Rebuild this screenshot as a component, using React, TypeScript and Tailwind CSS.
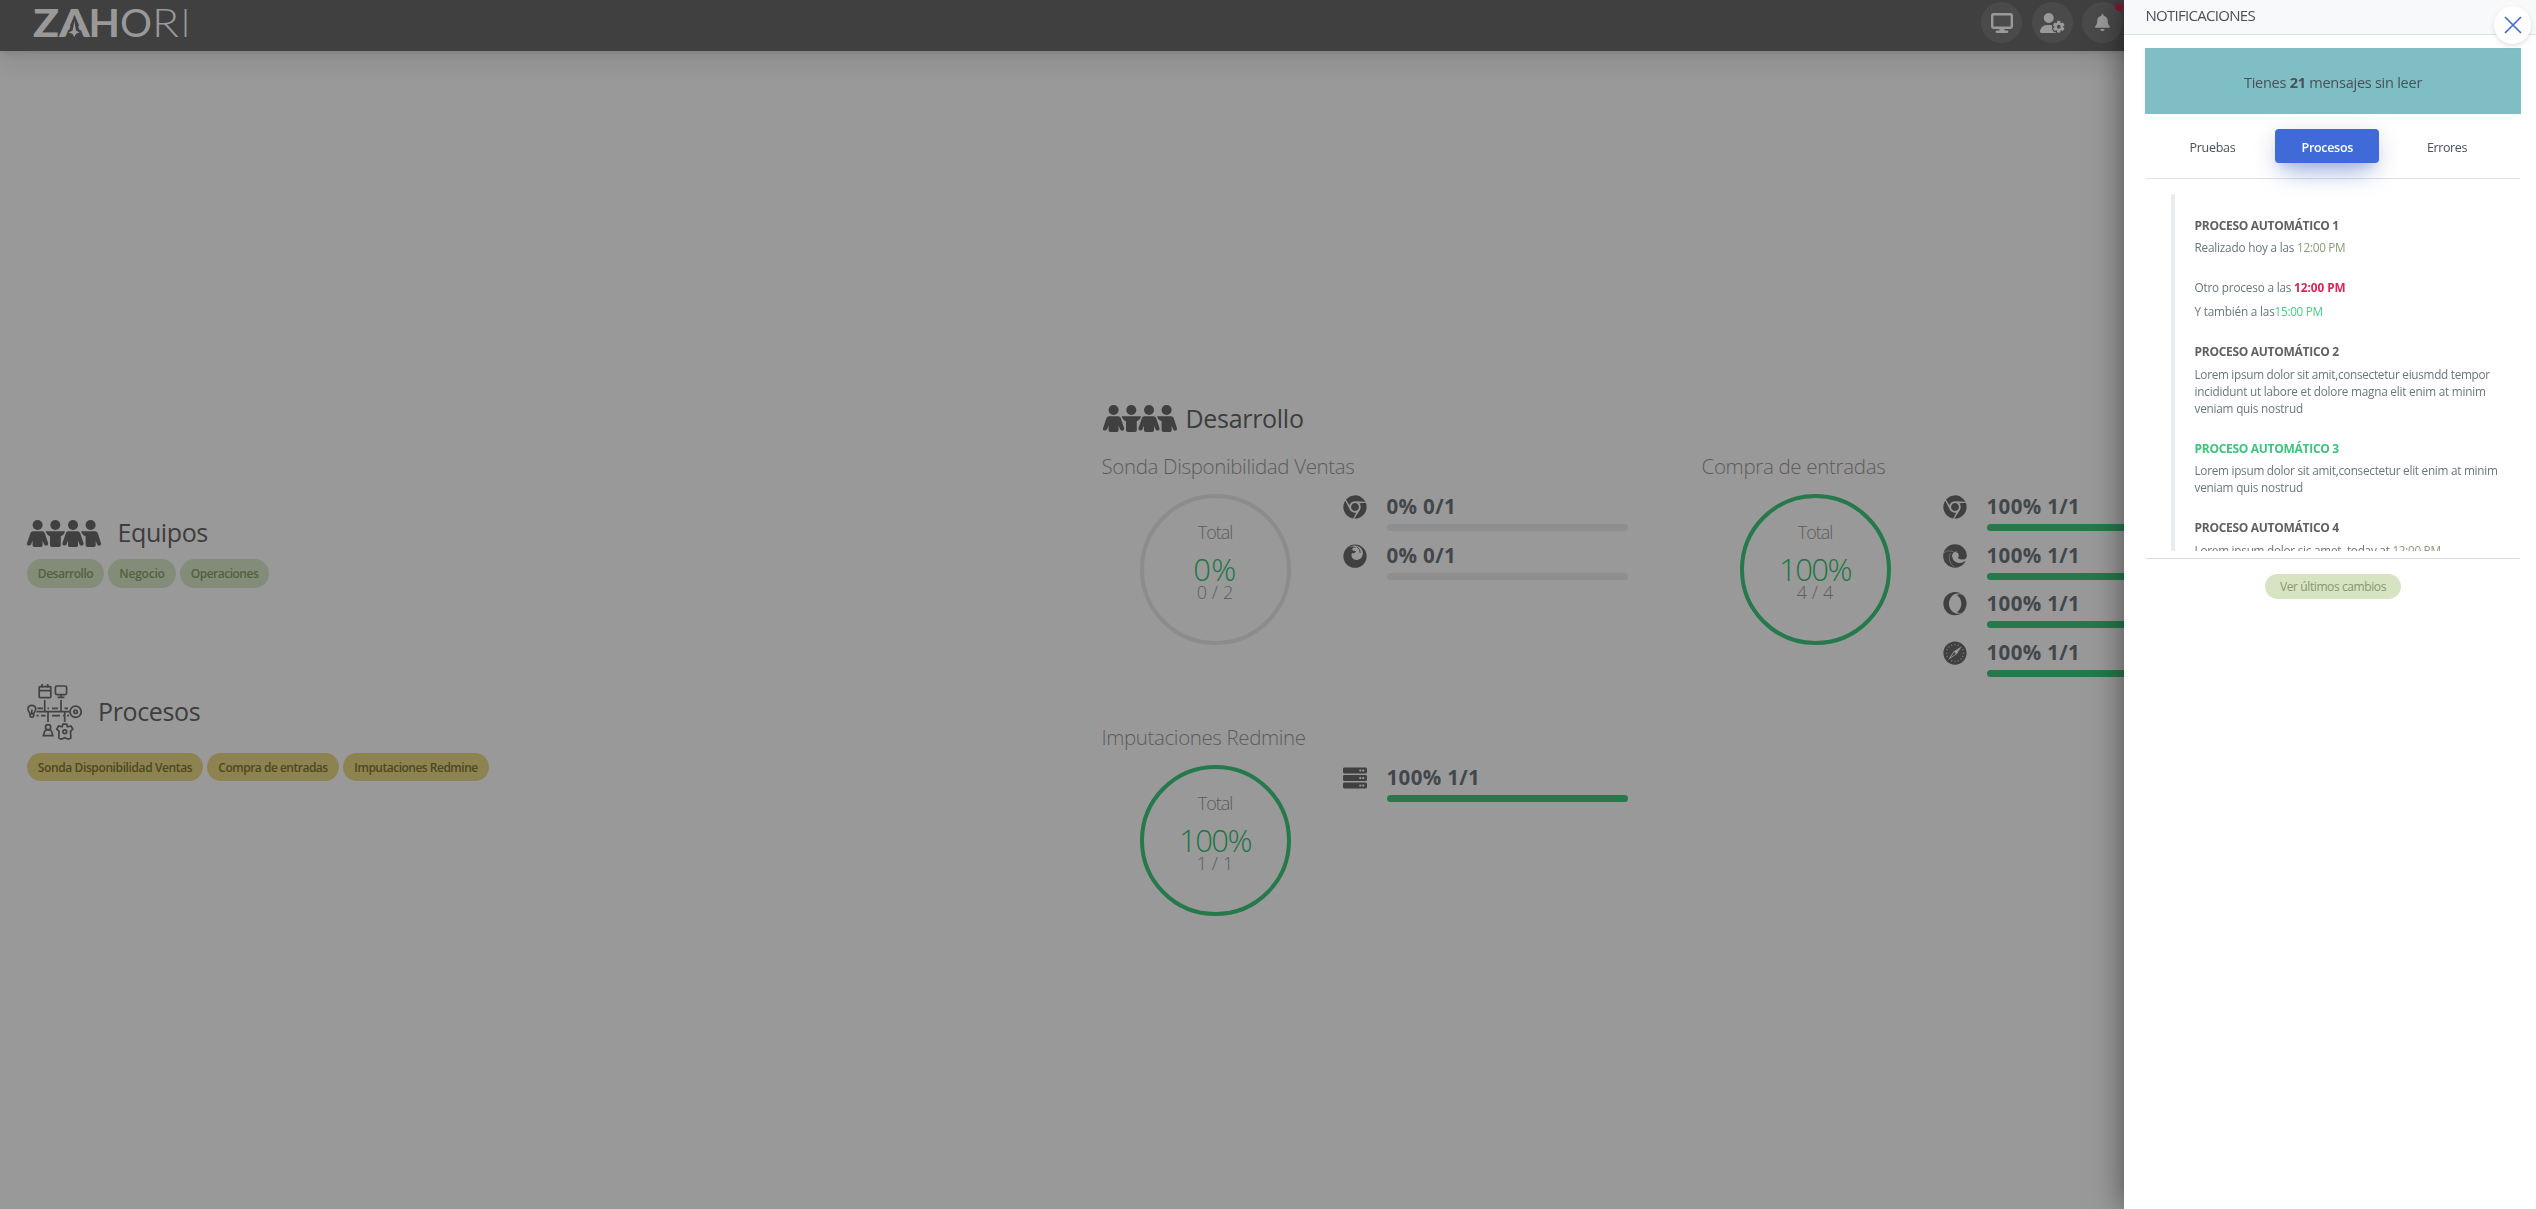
import type { ReactNode } from "react";
import { FaChrome, FaServer, FaBell, FaOpera, FaSafari } from "react-icons/fa";
import { FaUserGear } from "react-icons/fa6";

function Logo() {
  return (
    <svg
      className="h-[51px] w-[200px] shrink-0 fill-[#999999] font-['Lato']"
      viewBox="0 0 200 51"
    >
      <g fontSize="38.5">
        <text x="33" y="37" fontWeight="900" textLength="26" lengthAdjust="spacingAndGlyphs">Z</text>
        <text x="59" y="37" fontWeight="900" textLength="31" lengthAdjust="spacingAndGlyphs">A</text>
        <text x="88.5" y="37" fontWeight="700" textLength="31.5" lengthAdjust="spacingAndGlyphs">H</text>
        <text x="120" y="37" fontWeight="400" textLength="32" lengthAdjust="spacingAndGlyphs">O</text>
        <text x="152" y="37" fontWeight="300" textLength="27" lengthAdjust="spacingAndGlyphs">R</text>
        <text x="181" y="37" fontWeight="300" textLength="9" lengthAdjust="spacingAndGlyphs">I</text>
      </g>
      <polygon points="74.3,17 66,37.6 82.6,37.6" fill="#404040" />
      <path d="M74.3 21 76 30.4 79.5 32.6 76 33.8 74.3 37 72.4 33.8 68.5 32.6 72.6 30.4Z" />
    </svg>
  );
}

function PeopleIcon() {
  return (
    <svg className="h-[27px] w-[74px] fill-[#404040]" viewBox="0 0 74 27">
      <circle cx="10.6" cy="5" r="5" />
      <circle cx="28.3" cy="5" r="5" />
      <circle cx="46" cy="5" r="5" />
      <circle cx="63.6" cy="5" r="5" />
      <path d="M6 11.3H15.2Q17 11.3 17.7 13L21.2 23.2Q21.4 25.4 19.5 25.7 17.6 25.8 17 24.3L15.6 20.5V25.6Q15.4 27 14 27H7.2Q5.6 27 5.6 25.6V20.5L4.2 24.3Q3.5 25.8 1.5 25.6-.4 25.2 0 23.2L3.5 13Q4.2 11.3 6 11.3Z" />
      <path d="M41.4 11.3H50.6Q52.4 11.3 53.1 13L56.6 23.2Q56.8 25.4 54.9 25.7 53 25.8 52.4 24.3L51 20.5V25.6Q50.8 27 49.4 27H42.6Q41 27 41 25.6V20.5L39.6 24.3Q38.9 25.8 36.9 25.6 35 25.2 35.4 23.2L38.9 13Q39.6 11.3 41.4 11.3Z" />
      <path d="M18.6 11.3H38L37.2 13.6Q36.6 14.9 35.2 15.4L33.8 16.2V25.6Q33.6 27 32 27H25Q23.2 27 23 25.6V16.2L21.5 15.4Q20.2 14.8 19.6 13.6Z" />
      <path d="M54 11.3H68.2Q70 11.3 70.7 13L74 23.2Q74.2 25.4 72.3 25.7 70.6 25.8 70 24.3L68.7 20.5V25.6Q68.5 27 67 27H60.4Q58.8 27 58.6 25.6V16.2L57 15.4Q55.6 14.8 55 13.6Z" />
    </svg>
  );
}

function ProcessIcon() {
  return (
    <svg
      className="h-[56px] w-[55px] fill-none stroke-[#434343] stroke-[1.7]"
      viewBox="0 0 55 56"
    >
      <rect x="12.2" y="2.6" width="11.6" height="11" rx="0.8" />
      <path d="M12.2 6.6H23.8M15.2 0V3.4M20.7 0V3.4" />
      <rect x="28.4" y="2" width="11.2" height="8.6" rx="1.6" />
      <path d="M34 10.6V13.4M30.6 13.4H37.4" />
      <path d="M17.7 16V27.7M34 16V27.7M21 27.7V38M37.7 27.7V38M9.5 27.7H43" />
      <path d="M10.5 24.3H16M20.5 24.3H22M25 24.3H31M37.5 24.3H41" />
      <path d="M9.5 31.6H11.5M14 31.6H18.5M25 31.6H33M36 31.6H37M40 31.6H42" />
      <circle cx="48.6" cy="27.8" r="5.6" />
      <circle cx="48.6" cy="27.8" r="1.7" />
      <path d="M3 29.4Q.9 27 .9 24.4A4 4 0 0 1 8.7 24.4Q8.7 27 6.7 29.4V31.6Q6.7 33.2 4.8 33.2 3 33.2 3 31.6ZM3 29.8H6.7M4.8 25.5V29" />
      <circle cx="21.1" cy="43.3" r="2.6" />
      <path d="M16.4 51.6 17.6 47.4Q18 46 19.6 46H22.6Q24.2 46 24.6 47.4L25.8 51.6Z" />
      <path d="M36 40.2H39.6L40.5 42.8 44 42 45.8 45.2 43.5 47.4 43.8 54 41.4 55.2 37.8 53.6 34.2 55.2 31.8 54 32.1 47.4 29.8 45.2 31.6 42 35.1 42.8Z" />
      <circle cx="37.8" cy="47.8" r="1.9" />
    </svg>
  );
}

function FirefoxIcon() {
  return (
    <svg className="size-[24px]" viewBox="0 0 24 24">
      <circle cx="12" cy="12.2" r="11.6" fill="#404040" />
      <path
        d="M5.2 3.6Q10 .4 14.8 2 20.6 4.6 19.8 10.4 18.6 15.8 13.6 15.9 8.6 15.4 8.4 11 8.6 8.6 11 7.4 8.6 6.4 9.4 4.6 10.8 2.8 13.4 3.2 8.6 1.8 5.2 3.6Z"
        fill="#999999"
      />
      <path d="M8.2 7.8Q10.4 6.2 13.2 7.2 12 9.2 10 9.4Z" fill="#404040" />
      <path d="M13.6 2.6Q17.6 5 17.2 9" fill="none" stroke="#404040" strokeWidth="0.9" />
    </svg>
  );
}

function EdgeIcon() {
  return (
    <svg className="size-[24px]" viewBox="0 0 24 24">
      <circle cx="12" cy="12" r="11.8" fill="#404040" />
      <path
        d="M14.2 7.4Q9.2 7.4 8.9 12.4 9 18.4 14.4 19.8 19 20.6 22.4 17.6L24 17V12.4Q22.6 15.6 19.4 15.6 16.6 15.6 15 14 16.4 12.2 15.4 9.8 14.8 8.2 13 8.4Z"
        fill="#999999"
      />
      <path d="M9.2 12.6Q9.8 17.4 14.6 18.8 18.8 19.6 22.2 16.8 19.8 21.2 15 21.4 9.6 20.8 8.4 15.6Z" fill="#404040" />
      <path d="M.6 9.2Q3.6 5.8 8.2 7 10.6 7.6 11.6 8.8M7.6 9.2Q5.2 12.4 6.6 17 8 20.8 11 23" fill="none" stroke="#808080" strokeWidth="0.7" />
    </svg>
  );
}

function HeaderButton({ children, className }: { children: ReactNode; className: string }) {
  return (
    <div
      className={
        "flex size-[41px] items-center justify-center rounded-full bg-[#4a4a4a] text-[#999999] " + className
      }
    >
      {children}
    </div>
  );
}

function Pill({ children, className }: { children: string; className: string }) {
  return (
    <span
      className={
        "flex items-center justify-center rounded-[15px] text-[12px] font-semibold whitespace-nowrap " + className
      }
    >
      {children}
    </span>
  );
}

type Check = { icon: ReactNode; label: string; done: boolean };

function ProcessCard({
  title,
  titleClass,
  percent,
  percentClass,
  fraction,
  ringClass,
  checks,
}: {
  title: string;
  titleClass: string;
  percent: string;
  percentClass: string;
  fraction: string;
  ringClass: string;
  checks: Check[];
}) {
  return (
    <section className="w-[600px] shrink-0">
      <h3 className={"text-[20.5px] leading-[30px] font-light whitespace-nowrap text-[#5c5c5c] " + titleClass}>
        {title}
      </h3>
      <div className="mt-[13px] flex h-[195px]">
        <div
          className={
            "ml-[38px] flex size-[151px] flex-col items-center rounded-full border-4 pt-[22px] text-[18px] font-light text-[#5c5c5c] " +
            ringClass
          }
        >
          <span className="leading-[24px] tracking-[-1px]">Total</span>
          <span className={"mt-[11px] text-[31px] leading-[28px] text-[#1d7544] " + percentClass}>{percent}</span>
          <span className="leading-[18px] tracking-[0.1px]">{fraction}</span>
        </div>
        <div className="ml-[52px]">
          {checks.map((check, i) => (
            <div key={i} className="flex h-[48.67px]">
              <div className="mt-px flex size-[24px] items-center justify-center text-[24px] text-[#404040]">
                {check.icon}
              </div>
              <div className="ml-[20px] w-[241px]">
                <div className="text-[20.5px] leading-[24px] font-bold tracking-[0.35px] text-[#42474c]">
                  {check.label}
                </div>
                <div
                  className={
                    check.done
                      ? "mt-[6px] h-[7px] rounded bg-[#25794b]"
                      : "mt-[6px] h-[7px] rounded bg-[#8c8e90]"
                  }
                />
              </div>
            </div>
          ))}
        </div>
      </div>
    </section>
  );
}

function NotificationTitle({ children, className }: { children: string; className: string }) {
  return (
    <h4 className={"text-[12px] leading-[20px] font-bold tracking-[-0.29px] whitespace-nowrap " + className}>
      {children}
    </h4>
  );
}

function NotificationsPanel() {
  return (
    <aside className="fixed top-0 right-0 z-20 h-full w-[412px] bg-white text-[#495057] shadow-[0_0_30px_rgba(0,0,0,0.5)]">
      <header className="h-[35px] border-b border-[#dee2ec] bg-[#f8f9fa] pl-[21.5px]">
        <h2 className="text-[15px] leading-[30px] tracking-[-0.71px]">NOTIFICACIONES</h2>
      </header>
      <button className="absolute top-[6px] right-[5px] flex h-[38px] w-[37px] items-center justify-center rounded-full bg-white shadow-[0_2px_5px_rgba(0,0,0,0.12)]">
        <svg className="h-[18px] w-[18px] stroke-[#3f6ad8] stroke-[1.7]" viewBox="0 0 18 18">
          <path d="M1 1 17 17M17 1 1 17" />
        </svg>
      </button>

      <div className="mt-[13px] mr-[15px] ml-[21px] flex h-[66px] items-center justify-center bg-[#7fbec5] pt-[4px] text-[14.5px] tracking-[-0.25px]">
        <p>
          Tienes <b>21</b> mensajes sin leer
        </p>
      </div>

      <nav className="mr-[16px] ml-[22px] flex h-[65px] border-b border-[#dee2ec] pt-[15px] text-[12.5px] leading-[34px]">
        <a className="w-[129px] pt-[2px] pl-[43.5px] tracking-[-0.27px]">Pruebas</a>
        <a className="h-[34px] w-[104px] rounded bg-[#3f6ad8] pt-[2px] pl-[26.5px] font-semibold tracking-[-0.3px] text-white shadow-[0_16px_26px_-10px_rgba(63,106,216,0.56),0_4px_25px_0_rgba(0,0,0,0.12),0_8px_10px_-5px_rgba(63,106,216,0.2)]">
          Procesos
        </a>
        <a className="pt-[2px] pl-[48px] tracking-[-0.4px]">Errores</a>
      </nav>

      <div className="mt-[15px] ml-[47px] h-[357px] overflow-hidden rounded-t-[2px] border-l-4 border-[#e9ecef] pt-[22px] pl-[19.5px] text-[11.75px] leading-[17px] whitespace-nowrap text-[#6c757d]">
        <NotificationTitle className="text-[#616161]">PROCESO AUTOMÁTICO 1</NotificationTitle>
        <p className="mt-[3px] tracking-[-0.2px]">
          Realizado hoy a las <span className="tracking-[-0.3px] text-[#8b9c76]">12:00 PM</span>
        </p>
        <p className="mt-[23px] tracking-[-0.18px]">
          Otro proceso a las <b className="tracking-[-0.03px] text-[#d92550]">12:00 PM</b>
        </p>
        <p className="mt-[7px] tracking-[-0.19px]">
          Y también a las<span className="font-medium tracking-[-0.3px] text-[#4acb88]">15:00 PM</span>
        </p>
        <NotificationTitle className="mt-[22px] text-[#616161]">PROCESO AUTOMÁTICO 2</NotificationTitle>
        <p className="mt-[4px] tracking-[-0.28px]">Lorem ipsum dolor sit amit,consectetur eiusmdd tempor</p>
        <p className="tracking-[-0.21px]">incididunt ut labore et dolore magna elit enim at minim</p>
        <p className="tracking-[-0.21px]">veniam quis nostrud</p>
        <NotificationTitle className="mt-[22px] text-[#3ac47d]">PROCESO AUTOMÁTICO 3</NotificationTitle>
        <p className="mt-[3px] tracking-[-0.26px]">Lorem ipsum dolor sit amit,consectetur elit enim at minim</p>
        <p className="tracking-[-0.21px]">veniam quis nostrud</p>
        <NotificationTitle className="mt-[22px] text-[#616161]">PROCESO AUTOMÁTICO 4</NotificationTitle>
        <p className="mt-[4px] tracking-[-0.24px]">
          Lorem ipsum dolor sic amet, today at <span className="tracking-[-0.3px] text-[#8b9c76]">12:00 PM</span>
        </p>
      </div>

      <div className="mt-[7px] mr-[16px] ml-[22px] flex border-t border-[#dadce6] pt-[15px] pl-[119px]">
        <button className="h-[25px] w-[136px] rounded-full bg-[#d7e4c3] text-[12px] leading-[25px] tracking-[-0.4px] text-[#86976f]">
          Ver últimos cambios
        </button>
      </div>
    </aside>
  );
}

export default function App() {
  return (
    <div className="h-[1209px] w-[2536px] overflow-hidden bg-[#999999] font-['Open_Sans',sans-serif]">
      <header className="relative flex h-[51px] items-start bg-[#404040] shadow-[0_7.5px_35px_rgba(4,9,20,0.04),0_15px_22px_rgba(4,9,20,0.04),0_4px_8px_rgba(4,9,20,0.06),0_2px_3px_rgba(4,9,20,0.04)]">
        <Logo />
        <div className="ml-[1781px] flex gap-[10px] pt-[2px]">
          <HeaderButton className="">
            <svg className="h-[20px] w-[22px]" viewBox="0 0 22 20">
              <rect x="1.2" y="1.2" width="19.6" height="13.6" rx="1.2" fill="none" stroke="currentColor" strokeWidth="2.4" />
              <path d="M8.5 15H13.5V17.6H16.2Q17.4 18 17.4 18.8T16.2 20H5.8Q4.6 19.8 4.6 18.8T5.8 17.6H8.5Z" fill="currentColor" />
            </svg>
          </HeaderButton>
          <HeaderButton className="">
            <FaUserGear className="h-[20px] w-[25px]" />
          </HeaderButton>
          <HeaderButton className="relative -ml-px">
            <FaBell className="h-[17px] w-[15px]" />
            <span className="absolute top-px right-0 h-[8px] w-[8px] rounded-full bg-[#7f1a35]" />
          </HeaderButton>
        </div>
      </header>

      <main className="flex">
        <div className="w-[1101.5px] shrink-0 pt-[465px] pl-[27px]">
          <div className="flex h-[34px] items-center">
            <PeopleIcon />
            <h2 className="-mt-[2px] ml-[16.5px] text-[25px] leading-[34px] tracking-[-0.4px] text-[#3d3d3d]">Equipos</h2>
          </div>
          <div className="mt-[9px] flex h-[29px] gap-[4px] text-[#53613f]">
            <Pill className="w-[77px] bg-[#838c79] tracking-[-0.49px]">Desarrollo</Pill>
            <Pill className="w-[68px] bg-[#838c79] tracking-[-0.23px]">Negocio</Pill>
            <Pill className="w-[89px] bg-[#838c79] tracking-[-0.5px]">Operaciones</Pill>
          </div>
          <div className="mt-[96px] flex h-[56px] items-center">
            <ProcessIcon />
            <h2 className="-mt-[2px] ml-[16px] text-[25px] leading-[34px] tracking-[-0.35px] text-[#3d3d3d]">Procesos</h2>
          </div>
          <div className="mt-[13px] flex h-[28px] gap-[4px] text-[#4f4720]">
            <Pill className="w-[176px] bg-[#8c8351] pt-px tracking-[-0.39px]">Sonda Disponibilidad Ventas</Pill>
            <Pill className="w-[132px] bg-[#8c8351] pt-px tracking-[-0.5px]">Compra de entradas</Pill>
            <Pill className="w-[146px] bg-[#8c8351] pt-px tracking-[-0.5px]">Imputaciones Redmine</Pill>
          </div>
        </div>

        <div className="w-[1434.5px] shrink-0 overflow-hidden pt-[350px]">
          <div className="flex h-[35px] items-center pl-[1.5px]">
            <PeopleIcon />
            <h2 className="-mt-[2px] ml-[8.5px] text-[25px] leading-[34px] tracking-[-0.3px] text-[#3d3d3d]">Desarrollo</h2>
          </div>
          <div className="mt-[15px] flex">
            <ProcessCard
              title="Sonda Disponibilidad Ventas"
              titleClass="tracking-[-0.35px]"
              percent="0%"
              percentClass="tracking-[0.3px]"
              fraction="0 / 2"
              ringClass="border-[#8c8c8c]"
              checks={[
                { icon: <FaChrome />, label: "0% 0/1", done: false },
                { icon: <FirefoxIcon />, label: "0% 0/1", done: false },
              ]}
            />
            <ProcessCard
              title="Compra de entradas"
              titleClass="tracking-[-0.32px]"
              percent="100%"
              percentClass="tracking-[-1.5px]"
              fraction="4 / 4"
              ringClass="border-[#25794b]"
              checks={[
                { icon: <FaChrome />, label: "100% 1/1", done: true },
                { icon: <EdgeIcon />, label: "100% 1/1", done: true },
                { icon: <FaOpera />, label: "100% 1/1", done: true },
                { icon: <FaSafari />, label: "100% 1/1", done: true },
              ]}
            />
          </div>
          <div className="mt-[33px] flex">
            <ProcessCard
              title="Imputaciones Redmine"
              titleClass="tracking-[-0.38px]"
              percent="100%"
              percentClass="tracking-[-1.5px]"
              fraction="1 / 1"
              ringClass="border-[#25794b]"
              checks={[{ icon: <FaServer />, label: "100% 1/1", done: true }]}
            />
          </div>
        </div>
      </main>

      <NotificationsPanel />
    </div>
  );
}
